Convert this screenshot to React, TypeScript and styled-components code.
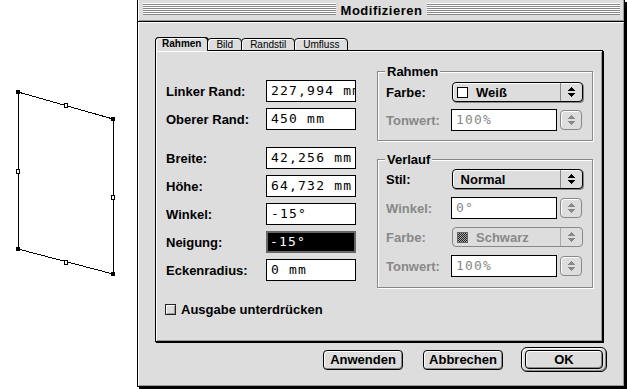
import React from 'react';
import styled, { createGlobalStyle } from 'styled-components';

const GlobalStyle = createGlobalStyle`
  html, body {
    margin: 0;
    padding: 0;
    background: #fff;
  }
  body {
    font-family: "Liberation Sans", Arial, sans-serif;
    -webkit-font-smoothing: none;
  }
`;

const Screen = styled.div`
  display: flex;
  width: 627px;
  height: 389px;
  overflow: hidden;
  background: #fff;
`;

const Canvas = styled.div`
  width: 137px;
  flex: none;
`;

const Window = styled.div`
  width: 488px;
  height: 387px;
  flex: none;
  box-sizing: border-box;
  border: 1px solid #000;
  border-top: none;
  box-shadow: 2px 2px 0 #000;
  background: #ddd;
  display: flex;
  flex-direction: column;
`;

const TitleBar = styled.div`
  height: 22px;
  flex: none;
  display: flex;
  align-items: flex-start;
  padding: 3px 4px 0 5px;
  box-sizing: border-box;
  border-bottom: 1px solid #000;
  background: #ddd;
  box-shadow: inset 1px 0 0 #fff, inset -1px -1px 0 #999;
`;

const Stripes = styled.div`
  flex: 1;
  height: 12px;
  background: repeating-linear-gradient(to bottom, #fff 0 1px, #888 1px 2px);
`;

const Title = styled.div`
  padding: 0 5px;
  font-size: 13px;
  font-weight: bold;
  letter-spacing: 0.5px;
  line-height: 15px;
  color: #000;
`;

const Body = styled.div`
  flex: 1;
  padding: 15px 17px 0 17px;
  box-shadow: inset 1px 1px 0 #fff, inset -1px -1px 0 #999;
`;

const TabStrip = styled.div`
  display: flex;
  align-items: flex-end;
  height: 14px;
  margin-bottom: -1px;
  position: relative;
  z-index: 1;
`;

const Tab = styled.div<{ $active?: boolean }>`
  height: ${(p) => (p.$active ? 14 : 13)}px;
  box-sizing: border-box;
  border: 1px solid #000;
  border-bottom: ${(p) => (p.$active ? 'none' : '1px solid #000')};
  border-radius: 4px 4px 0 0;
  margin-right: -1px;
  padding: 0 ${(p) => (p.$active ? 6 : 8)}px;
  background: #ddd;
  box-shadow: ${(p) => (p.$active ? 'inset 1px 1px 0 #fff, 1px 0 0 #000' : 'inset 1px 1px 0 #fff')};
  font-size: 10px;
  font-weight: ${(p) => (p.$active ? 'bold' : 'normal')};
  line-height: 12px;
  color: #000;
`;

const Panel = styled.div`
  width: 448px;
  height: 292px;
  box-sizing: border-box;
  border: 1px solid #000;
  box-shadow: 1px 1px 0 #000, inset 1px 1px 0 #fff, inset -1px -1px 0 #999;
  padding: 0 10px;
`;

const Columns = styled.div`
  display: flex;
  align-items: flex-start;
`;

const LeftCol = styled.div`
  width: 190px;
  padding-top: 29px;
  display: flex;
  flex-direction: column;
  gap: 6px;
`;

const Spacer = styled.div`
  height: 5px;
`;

const RightCol = styled.div`
  width: 216px;
  margin-left: 21px;
  padding-top: 20px;
  display: flex;
  flex-direction: column;
  gap: 18px;
`;

const Row = styled.div<{ $labelWidth?: number }>`
  display: grid;
  grid-template-columns: ${(p) => p.$labelWidth ?? 100}px auto;
  align-items: center;
  height: 22px;
`;

const Label = styled.div<{ $disabled?: boolean }>`
  font-size: 13px;
  font-weight: bold;
  color: ${(p) => (p.$disabled ? '#888' : '#000')};
  white-space: nowrap;
`;

const Field = styled.div<{ $width?: number; $disabled?: boolean; $selected?: boolean }>`
  width: ${(p) => p.$width ?? 90}px;
  height: 22px;
  box-sizing: border-box;
  border: ${(p) => (p.$selected ? '2px solid #666' : '1px solid #000')};
  background: ${(p) => (p.$selected ? '#000' : '#fff')};
  color: ${(p) => (p.$selected ? '#fff' : p.$disabled ? '#888' : '#000')};
  padding-left: ${(p) => (p.$selected ? 2 : 4)}px;
  font-family: "DejaVu Sans Mono", "Liberation Mono", monospace;
  font-size: 13px;
  letter-spacing: 1.2px;
  line-height: ${(p) => (p.$selected ? 18 : 20)}px;
  white-space: nowrap;
  overflow: hidden;
`;

const Group = styled.div<{ $pt: number; $pb: number; $gap: number }>`
  position: relative;
  border: 1px solid #888;
  box-shadow: 1px 1px 0 #fff, inset 1px 1px 0 #fff;
  padding: ${(p) => p.$pt}px 9px ${(p) => p.$pb}px 8px;
  display: flex;
  flex-direction: column;
  gap: ${(p) => p.$gap}px;
`;

const GroupTitle = styled.div`
  position: absolute;
  top: -8px;
  left: 7px;
  padding: 0 2px;
  background: #ddd;
  font-size: 13px;
  font-weight: bold;
  line-height: 15px;
`;

const Control = styled.div`
  display: flex;
  align-items: center;
  gap: 3px;
`;

const Popup = styled.div<{ $disabled?: boolean }>`
  display: flex;
  width: 131px;
  height: 20px;
  margin-left: 1px;
  box-sizing: border-box;
  border: 1px solid ${(p) => (p.$disabled ? '#888' : '#000')};
  border-radius: 4px;
  background: #ddd;
  box-shadow: ${(p) => (p.$disabled ? 'none' : '1px 1px 0 #888, inset 1px 1px 0 #fff')};
  color: ${(p) => (p.$disabled ? '#888' : '#000')};
`;

const PopupValue = styled.div`
  flex: 1;
  display: flex;
  align-items: center;
  gap: 8px;
  padding-left: 4px;
  font-size: 13px;
  font-weight: bold;
`;

const PopupArrow = styled.div<{ $disabled?: boolean }>`
  width: 21px;
  border-left: 1px solid ${(p) => (p.$disabled ? '#aaa' : '#888')};
  display: flex;
  align-items: center;
  justify-content: center;
`;

const Swatch = styled.div<{ $dark?: boolean }>`
  width: 11px;
  height: 11px;
  box-sizing: border-box;
  border: 1px solid ${(p) => (p.$dark ? '#666' : '#000')};
  background: ${(p) =>
    p.$dark ? 'repeating-conic-gradient(#222 0 25%, #aaa 0 50%) 0 0 / 2px 2px' : '#fff'};
`;

const Stepper = styled.div`
  width: 22px;
  height: 20px;
  box-sizing: border-box;
  border: 1px solid #888;
  border-radius: 4px;
  background: #ddd;
  box-shadow: inset 1px 1px 0 #fff;
  display: flex;
  align-items: center;
  justify-content: center;
`;

const CheckRow = styled.label`
  display: flex;
  align-items: center;
  gap: 5px;
  margin: 14px 0 0 -1px;
  font-size: 13px;
  font-weight: bold;
`;

const CheckBox = styled.span`
  width: 11px;
  height: 11px;
  box-sizing: border-box;
  border: 1px solid #222;
  background: #ddd;
  box-shadow: inset 1px 1px 0 #fff, inset -1px -1px 0 #999;
`;

const ButtonRow = styled.div`
  display: flex;
  justify-content: flex-end;
  align-items: center;
  height: 25px;
  margin-top: 5px;
`;

const Button = styled.div<{ $gap?: number }>`
  width: 80px;
  height: 20px;
  box-sizing: border-box;
  margin-right: ${(p) => p.$gap ?? 0}px;
  border: 1px solid #000;
  border-radius: 4px;
  background: #ddd;
  box-shadow: inset 1px 1px 0 #fff, inset -1px -1px 0 #888;
  font-size: 13px;
  font-weight: bold;
  line-height: 18px;
  text-align: center;
`;

const DefaultRing = styled.div`
  width: 86px;
  height: 25px;
  box-sizing: border-box;
  border: 1px solid #000;
  border-radius: 6px;
  background: #ddd;
  box-shadow: inset 1px 1px 0 #fff, inset -1px -1px 0 #888;
  display: flex;
  align-items: center;
  justify-content: center;

  ${Button} {
    width: 78px;
    height: 19px;
    line-height: 17px;
  }
`;

const UpDown = ({ color }: { color: string }) => (
  <svg width="7" height="10" viewBox="0 0 7 10" shapeRendering="crispEdges">
    <path d="M3 0h1v1h1v1h1v1h1v1H0V3h1V2h1V1h1z" fill={color} />
    <path d="M0 6h7v1h-1v1h-1v1h-1v1h-1v-1h-1v-1h-1v-1h-1z" fill={color} />
  </svg>
);

const Shape = () => {
  const corners: [number, number][] = [
    [18, 92],
    [113, 119],
    [113, 274],
    [18, 249],
  ];
  const mids: [number, number][] = [
    [66, 105],
    [113, 197],
    [66, 262],
    [18, 171],
  ];
  return (
    <svg width="137" height="389" viewBox="0 0 137 389">
      <polygon
        points={corners.map((c) => c.join(',')).join(' ')}
        fill="none"
        stroke="#000"
        strokeWidth="1"
        shapeRendering="crispEdges"
      />
      {corners.map(([x, y], i) => (
        <rect key={'c' + i} x={x - 2} y={y - 2} width="4" height="4" fill="#000" />
      ))}
      {mids.map(([x, y], i) => (
        <rect key={'m' + i} x={x - 1.5} y={y - 1.5} width="3" height="4" fill="#fff" stroke="#000" strokeWidth="1" />
      ))}
    </svg>
  );
};

export default function App() {
  return (
    <>
      <GlobalStyle />
      <Screen>
        <Canvas>
          <Shape />
        </Canvas>
        <Window>
          <TitleBar>
            <Stripes />
            <Title>Modifizieren</Title>
            <Stripes />
          </TitleBar>
          <Body>
            <TabStrip>
              <Tab $active>Rahmen</Tab>
              <Tab>Bild</Tab>
              <Tab>Randstil</Tab>
              <Tab>Umfluss</Tab>
            </TabStrip>
            <Panel>
              <Columns>
                <LeftCol>
                  <Row>
                    <Label>Linker Rand:</Label>
                    <Field>227,994 mm</Field>
                  </Row>
                  <Row>
                    <Label>Oberer Rand:</Label>
                    <Field>450 mm</Field>
                  </Row>
                  <Spacer />
                  <Row>
                    <Label>Breite:</Label>
                    <Field>42,256 mm</Field>
                  </Row>
                  <Row>
                    <Label>Höhe:</Label>
                    <Field>64,732 mm</Field>
                  </Row>
                  <Row>
                    <Label>Winkel:</Label>
                    <Field>-15°</Field>
                  </Row>
                  <Row>
                    <Label>Neigung:</Label>
                    <Field $selected>-15°</Field>
                  </Row>
                  <Row>
                    <Label>Eckenradius:</Label>
                    <Field>0 mm</Field>
                  </Row>
                </LeftCol>
                <RightCol>
                  <Group $pt={9} $pb={9} $gap={6}>
                    <GroupTitle>Rahmen</GroupTitle>
                    <Row $labelWidth={65}>
                      <Label>Farbe:</Label>
                      <Popup>
                        <PopupValue>
                          <Swatch />
                          Weiß
                        </PopupValue>
                        <PopupArrow>
                          <UpDown color="#000" />
                        </PopupArrow>
                      </Popup>
                    </Row>
                    <Row $labelWidth={65}>
                      <Label $disabled>Tonwert:</Label>
                      <Control>
                        <Field $width={106} $disabled>
                          100%
                        </Field>
                        <Stepper>
                          <UpDown color="#888" />
                        </Stepper>
                      </Control>
                    </Row>
                  </Group>
                  <Group $pt={8} $pb={10} $gap={7}>
                    <GroupTitle>Verlauf</GroupTitle>
                    <Row $labelWidth={65}>
                      <Label>Stil:</Label>
                      <Popup>
                        <PopupValue>&nbsp;Normal</PopupValue>
                        <PopupArrow>
                          <UpDown color="#000" />
                        </PopupArrow>
                      </Popup>
                    </Row>
                    <Row $labelWidth={65}>
                      <Label $disabled>Winkel:</Label>
                      <Control>
                        <Field $width={106} $disabled>
                          0°
                        </Field>
                        <Stepper>
                          <UpDown color="#888" />
                        </Stepper>
                      </Control>
                    </Row>
                    <Row $labelWidth={65}>
                      <Label $disabled>Farbe:</Label>
                      <Popup $disabled>
                        <PopupValue>
                          <Swatch $dark />
                          Schwarz
                        </PopupValue>
                        <PopupArrow $disabled>
                          <UpDown color="#888" />
                        </PopupArrow>
                      </Popup>
                    </Row>
                    <Row $labelWidth={65}>
                      <Label $disabled>Tonwert:</Label>
                      <Control>
                        <Field $width={106} $disabled>
                          100%
                        </Field>
                        <Stepper>
                          <UpDown color="#888" />
                        </Stepper>
                      </Control>
                    </Row>
                  </Group>
                </RightCol>
              </Columns>
              <CheckRow>
                <CheckBox />
                Ausgabe unterdrücken
              </CheckRow>
            </Panel>
            <ButtonRow>
              <Button $gap={20}>Anwenden</Button>
              <Button $gap={18}>Abbrechen</Button>
              <DefaultRing>
                <Button>OK</Button>
              </DefaultRing>
            </ButtonRow>
          </Body>
        </Window>
      </Screen>
    </>
  );
}
